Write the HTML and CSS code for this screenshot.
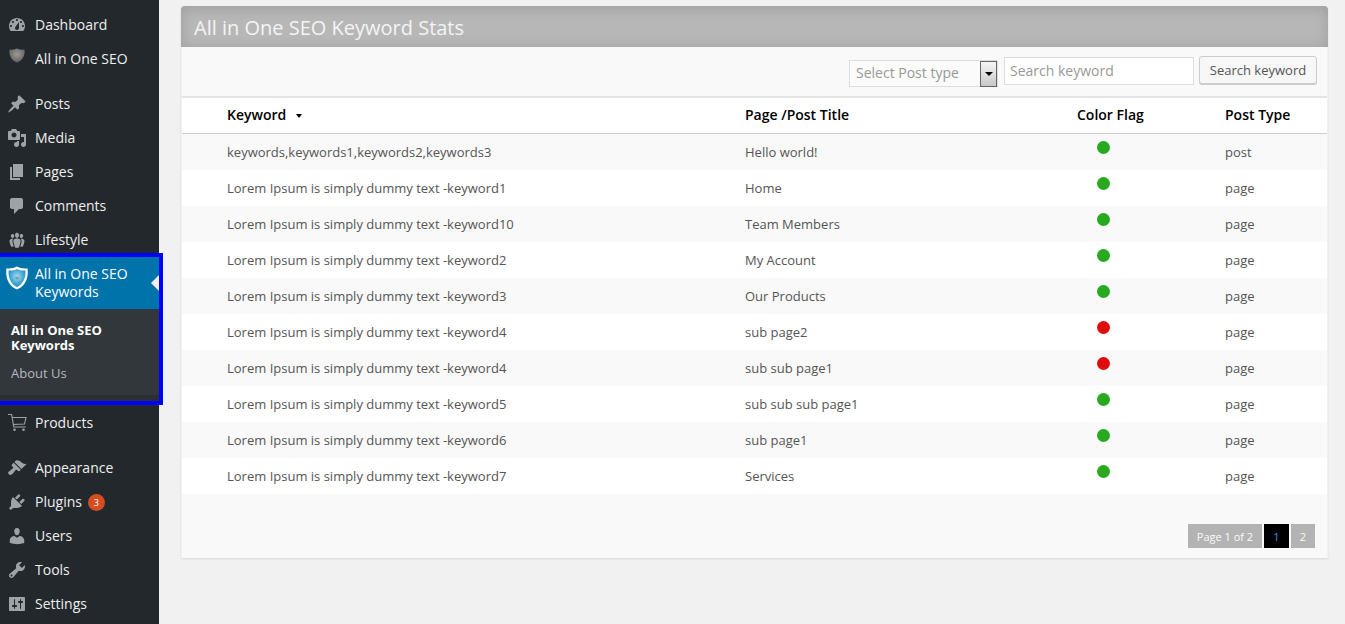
FILE: index.html
```html
<!DOCTYPE html>
<html lang="en">
<head>
    <meta charset="UTF-8" />
    <title>All in One SEO Keyword Stats</title>
    <link rel="stylesheet" href="styles.css">
</head>
<body>
    <div class="sidebar">
        <ul class="menu">
            <li class="menu-item"><svg class="icon" viewBox="0 0 20 20"><path fill-rule="evenodd" d="M3.76 16h12.48c1.1-1.37 1.76-3.11 1.76-5 0-4.42-3.58-8-8-8s-8 3.58-8 8c0 1.89.66 3.63 1.76 5zM10 4c.55 0 1 .45 1 1s-.45 1-1 1-1-.45-1-1 .45-1 1-1zM6 6c.55 0 1 .45 1 1s-.45 1-1 1-1-.45-1-1 .45-1 1-1zm8 0c.55 0 1 .45 1 1s-.45 1-1 1-1-.45-1-1 .45-1 1-1zm-5.37 5.55L12 7v6c0 1.1-.9 2-2 2s-2-.9-2-2c0-.57.24-1.08.63-1.45zM4 10c.55 0 1 .45 1 1s-.45 1-1 1-1-.45-1-1 .45-1 1-1zm12 0c.55 0 1 .45 1 1s-.45 1-1 1-1-.45-1-1 .45-1 1-1z"/></svg>Dashboard</li>
            <li class="menu-item"><svg class="icon icon-up" viewBox="0 0 20 20"><defs><radialGradient id="greyShield" cx="0.5" cy="0.4" r="0.65"><stop offset="0" stop-color="#9a9a98"/><stop offset="1" stop-color="#5c5c5a"/></radialGradient></defs><path fill="url(#greyShield)" d="M10 2.500C7.500 3.600 5 3.900 2.400 3.600c-.4 5.400 1.200 10.400 7.600 13 6.400-2.600 8-7.600 7.600-13C15 3.900 12.500 3.600 10 2.500z"/></svg>All in One SEO</li>
        </ul>
        <ul class="menu menu-group">
            <li class="menu-item"><svg class="icon" viewBox="0 0 20 20"><path d="M10.44 3.020l1.820-1.820 6.360 6.350-1.830 1.820c-1.050-.68-2.480-.57-3.410.36l-.75.75c-.92.93-1.040 2.350-.35 3.410l-1.830 1.820-2.410-2.410-2.800 2.790c-.42.42-3.380 2.710-3.800 2.290s1.860-3.390 2.280-3.810l2.790-2.790L4.100 9.360l1.830-1.820c1.050.69 2.480.57 3.400-.36l.75-.75c.93-.92 1.050-2.350.36-3.410z"/></svg>Posts</li>
            <li class="menu-item"><svg class="icon" viewBox="0 0 20 20"><path fill-rule="evenodd" d="M13 11V4c0-.55-.45-1-1-1h-1.670L9 1H5L3.670 3H2c-.55 0-1 .45-1 1v7c0 .55.45 1 1 1h10c.55 0 1-.45 1-1zM7 4.500c1.380 0 2.500 1.120 2.500 2.500S8.380 9.500 7 9.500 4.500 8.380 4.500 7 5.620 4.500 7 4.500zM14 6h5v10.500c0 1.380-1.120 2.500-2.500 2.500S14 17.880 14 16.500s1.120-2.500 2.500-2.500c.17 0 .34.02.5.05V9h-3V6zm-4 8.050V13h2v3.500c0 1.380-1.120 2.500-2.500 2.500S7 17.880 7 16.500 8.120 14 9.500 14c.17 0 .34.02.5.05z"/></svg>Media</li>
            <li class="menu-item"><svg class="icon" viewBox="0 0 20 20"><path d="M6 15V2h10v13H6zm-1 1h8v2H3V5h2v11z"/></svg>Pages</li>
            <li class="menu-item"><svg class="icon" viewBox="0 0 20 20"><path d="M5 2h9c1.100 0 2 .9 2 2v7c0 1.100-.9 2-2 2h-2l-5 5v-5H5c-1.100 0-2-.9-2-2V4c0-1.100.9-2 2-2z"/></svg>Comments</li>
            <li class="menu-item"><svg class="icon" viewBox="0 0 20 20"><path d="M8.030 4.460c-.29 1.280.55 3.460 1.970 3.460 1.410 0 2.250-2.180 1.960-3.460-.22-.98-1.080-1.630-1.960-1.630-.89 0-1.740.65-1.970 1.630zm-4.130.9c-.25 1.080.47 2.930 1.670 2.930s1.920-1.850 1.670-2.930c-.19-.83-.92-1.390-1.670-1.390s-1.480.56-1.670 1.390zm8.860 0c-.25 1.080.47 2.930 1.660 2.930 1.200 0 1.920-1.850 1.670-2.930-.19-.83-.92-1.390-1.670-1.390-.74 0-1.470.56-1.660 1.390zm-.59 11.430l1.250-4.300C14.200 10 12.710 8.470 10 8.470c-2.720 0-4.210 1.530-3.440 4.020l1.260 4.300C8.050 17.510 9 18 10 18c.98 0 1.940-.49 2.170-1.210zm-6.100-7.630c-.49.67-.96 1.830-.42 3.590l1.120 3.790c-.34.2-.77.31-1.200.31-.85 0-1.650-.41-1.850-1.030l-1.070-3.650c-.65-2.110.61-3.400 2.920-3.400.27 0 .54.02.79.06-.1.1-.2.22-.29.33zm8.350-.39c2.310 0 3.580 1.290 2.920 3.400l-1.070 3.650c-.2.62-1 1.030-1.850 1.030-.43 0-.86-.11-1.200-.31l1.110-3.770c.55-1.780.08-2.940-.42-3.610-.08-.11-.18-.23-.28-.33.25-.04.51-.06.79-.06z"/></svg>Lifestyle</li>
            <li class="menu-current">
                <div class="current-head">
                    <svg class="shield" viewBox="0 0 22 24">
                        <defs><radialGradient id="blueShield" cx="0.5" cy="0.42" r="0.6"><stop offset="0" stop-color="#a5dcef"/><stop offset="0.55" stop-color="#4fb0d6"/><stop offset="1" stop-color="#1f86b8"/></radialGradient></defs>
                        <path fill="#fff" d="M11 .5C8 2 4 2.800.6 2.200.2 4 0 7 .6 10.500 1.700 16.500 5.500 21.500 11 23.500c5.500-2 9.300-7 10.400-13 .6-3.500.4-6.500 0-8.300C18 2.800 14 2 11 .5z"/>
                        <path fill="url(#blueShield)" d="M11 3C8.600 4.100 5.800 4.700 2.700 4.500c-.2 1.600-.2 3.700.2 5.700C3.900 15.200 7 19.200 11 21c4-1.800 7.100-5.800 8.100-10.800.4-2 .4-4.100.2-5.700C16.200 4.700 13.400 4.100 11 3z"/>
                        <ellipse cx="11" cy="12" rx="1.800" ry="1.600" fill="#7f9aa8"/>
                    </svg>
                    <span>All in One SEO Keywords</span>
                </div>
                <ul class="submenu">
                    <li class="sub-active">All in One SEO Keywords</li>
                    <li>About Us</li>
                </ul>
            </li>
            <li class="menu-item"><svg class="icon" viewBox="0 0 20 20"><path fill="none" stroke="#9ea3a8" stroke-width="1.100" d="M1 1.500h3.600l2.200 12.500h12M5.100 4.500h13.900l-1.500 6.500-11.500.5"/><circle cx="7.500" cy="16.800" r="1.300"/><circle cx="16.500" cy="16.800" r="1.300"/></svg>Products</li>
        </ul>
        <ul class="menu menu-group">
            <li class="menu-item"><svg class="icon" viewBox="0 0 20 20"><path d="M14.480 11.060L7.410 3.990l1.500-1.500c.5-.56 2.300-.47 3.510.32 1.210.8 1.430 1.280 2.910 2.100 1.180.64 2.450 1.260 4.450.85zm-.71.71L6.700 4.700 4.930 6.470c-.39.39-.39 1.020 0 1.410l1.060 1.060c.39.39.39 1.030 0 1.420-.6.6-1.430 1.110-2.210 1.690-.35.26-.7.53-1.010.84C1.430 13.230.4 14.790 1.800 16.200s2.970.39 4.310-.97c.31-.31.58-.66.84-1.010.58-.78 1.090-1.610 1.690-2.210.39-.39 1.030-.39 1.420 0l1.060 1.060c.39.39 1.020.39 1.410 0z"/></svg>Appearance</li>
            <li class="menu-item"><svg class="icon" viewBox="0 0 20 20"><path d="M13.110 4.360L9.870 7.600 8 5.730l3.240-3.240c.35-.34 1.050-.2 1.560.32.52.51.66 1.210.31 1.550zm-8 1.770l.91-1.120 9.010 9.010-1.190.84c-.71.71-2.630 1.160-3.820 1.160H6.140L4.900 17.260c-.59.59-1.540.59-2.120 0-.59-.58-.59-1.530 0-2.120l1.240-1.240v-3.880c0-1.130.4-3.190 1.090-3.890zm7.260 3.970l3.240-3.240c.34-.35 1.040-.21 1.550.31.52.51.66 1.210.31 1.550l-3.240 3.250z"/></svg>Plugins<span class="badge">3</span></li>
            <li class="menu-item"><svg class="icon" viewBox="0 0 20 20"><path d="M10 9.250c-2.270 0-2.730-3.440-2.730-3.440C7 4.020 7.820 2 9.970 2c2.160 0 2.980 2.020 2.710 3.810 0 0-.41 3.440-2.680 3.440zm0 2.570L12.720 10c2.390 0 4.520 2.330 4.520 4.530v2.490s-3.650 1.130-7.240 1.130c-3.650 0-7.240-1.130-7.240-1.130v-2.490c0-2.250 1.940-4.480 4.470-4.480z"/></svg>Users</li>
            <li class="menu-item"><svg class="icon" viewBox="0 0 20 20"><path fill-rule="evenodd" d="M16.680 9.770c-1.340 1.340-3.300 1.670-4.950.99l-5.410 6.520c-.99.99-2.590.99-3.580 0s-.99-2.590 0-3.570l6.520-5.420c-.68-1.650-.35-3.610.99-4.950 1.280-1.280 3.120-1.620 4.720-1.060l-2.890 2.890 2.820 2.820 2.860-2.870c.53 1.580.18 3.390-1.080 4.650zM3.810 16.210c.4.39 1.040.39 1.430 0 .4-.4.4-1.040 0-1.430-.39-.4-1.030-.4-1.430 0-.39.39-.39 1.030 0 1.430z"/></svg>Tools</li>
            <li class="menu-item"><svg class="icon" viewBox="0 0 20 20"><path fill-rule="evenodd" d="M18 16V4c0-.55-.45-1-1-1H3c-.55 0-1 .45-1 1v12c0 .55.45 1 1 1h14c.55 0 1-.45 1-1zM8 11h1c.55 0 1 .45 1 1s-.45 1-1 1H8v1.500c0 .28-.22.5-.5.5s-.5-.22-.5-.5V13H6c-.55 0-1-.45-1-1s.45-1 1-1h1V5.500c0-.28.22-.5.5-.5s.5.22.5.5V11zm5-2h-1c-.55 0-1-.45-1-1s.45-1 1-1h1V5.500c0-.28.22-.5.5-.5s.5.22.5.5V7h1c.55 0 1 .45 1 1s-.45 1-1 1h-1v5.500c0 .28-.22.5-.5.5s-.5-.22-.5-.5V9z"/></svg>Settings</li>
        </ul>
    </div>

    <div class="main">
        <div class="panel">
            <h2 class="panel-title">All in One SEO Keyword Stats</h2>
            <div class="panel-body">
                <div class="toolbar">
                    <div class="select-box">
                        <span class="select-label">Select Post type</span>
                        <span class="select-arrow"></span>
                    </div>
                    <input class="search-input" type="text" placeholder="Search keyword">
                    <button class="search-btn" type="button">Search keyword</button>
                </div>

                <table class="stats">
                    <thead>
                        <tr>
                            <th class="col-keyword">Keyword<span class="sort-arrow"></span></th>
                            <th class="col-title">Page /Post Title</th>
                            <th class="col-flag">Color Flag</th>
                            <th class="col-type">Post Type</th>
                        </tr>
                    </thead>
                    <tbody>
                        <tr><td class="col-keyword">keywords,keywords1,keywords2,keywords3</td><td>Hello world!</td><td><span class="dot green"></span></td><td>post</td></tr>
                        <tr><td class="col-keyword">Lorem Ipsum is simply dummy text -keyword1</td><td>Home</td><td><span class="dot green"></span></td><td>page</td></tr>
                        <tr><td class="col-keyword">Lorem Ipsum is simply dummy text -keyword10</td><td>Team Members</td><td><span class="dot green"></span></td><td>page</td></tr>
                        <tr><td class="col-keyword">Lorem Ipsum is simply dummy text -keyword2</td><td>My Account</td><td><span class="dot green"></span></td><td>page</td></tr>
                        <tr><td class="col-keyword">Lorem Ipsum is simply dummy text -keyword3</td><td>Our Products</td><td><span class="dot green"></span></td><td>page</td></tr>
                        <tr><td class="col-keyword">Lorem Ipsum is simply dummy text -keyword4</td><td>sub page2</td><td><span class="dot red"></span></td><td>page</td></tr>
                        <tr><td class="col-keyword">Lorem Ipsum is simply dummy text -keyword4</td><td>sub sub page1</td><td><span class="dot red"></span></td><td>page</td></tr>
                        <tr><td class="col-keyword">Lorem Ipsum is simply dummy text -keyword5</td><td>sub sub sub page1</td><td><span class="dot green"></span></td><td>page</td></tr>
                        <tr><td class="col-keyword">Lorem Ipsum is simply dummy text -keyword6</td><td>sub page1</td><td><span class="dot green"></span></td><td>page</td></tr>
                        <tr><td class="col-keyword">Lorem Ipsum is simply dummy text -keyword7</td><td>Services</td><td><span class="dot green"></span></td><td>page</td></tr>
                    </tbody>
                </table>

                <div class="pager">
                    <span class="pager-info">Page 1 of 2</span>
                    <span class="pager-num current">1</span>
                    <span class="pager-num">2</span>
                </div>
            </div>
        </div>
    </div>
</body>
</html>
```

FILE: styles.css
```css
html, body {
    height: 100%;
}

body {
    margin: 0;
    display: flex;
    overflow: hidden;
    font-family: 'Open Sans', sans-serif;
    background-color: #f1f1f1;
    color: #555;
}

ul {
    list-style: none;
    margin: 0;
    padding: 0;
}

/* sidebar */
.sidebar {
    flex: 0 0 159px;
    width: 159px;
    padding-top: 8px;
    background-color: #23282d;
    color: #eee;
    font-size: 14px;
}

.menu-group {
    margin-top: 11px;
}

.menu-item {
    display: flex;
    align-items: center;
    height: 34px;
    box-sizing: border-box;
    padding: 0 0 2px 7px;
}

.icon {
    flex: none;
    width: 20px;
    height: 20px;
    margin: 2px 8px 0 0;
    fill: #9ea3a8;
}

.menu-item .icon-up {
    margin-top: -4px;
}

.badge {
    width: 17px;
    height: 17px;
    margin: 2px 0 0 6px;
    border-radius: 50%;
    background-color: #d54e21;
    color: #fff;
    font-size: 9px;
    line-height: 17px;
    text-align: center;
}

.menu-current {
    position: relative;
    margin-bottom: 5px;
}

/* the blue box drawn over the screenshot */
.menu-current::after {
    content: '';
    position: absolute;
    top: -4px;
    left: 0;
    right: -4px;
    bottom: -4px;
    border: 4px solid #0000ff;
    border-left: none;
    pointer-events: none;
}

.current-head {
    position: relative;
    display: flex;
    height: 52px;
    padding: 8px 0 0 6px;
    box-sizing: border-box;
    background-color: #0073aa;
    color: #fff;
    line-height: 18px;
}

.current-head span {
    width: 110px;
}

.current-head::after {
    content: '';
    position: absolute;
    top: 18px;
    right: 0;
    border: 8px solid transparent;
    border-left: none;
    border-right-color: #f1f1f1;
}

.shield {
    flex: none;
    width: 22px;
    height: 24px;
    margin: 1px 7px 0 0;
}

.submenu {
    height: 92px;
    box-sizing: border-box;
    padding: 14px 12px 0 11px;
    background: linear-gradient(#32373c 86px, #2a2f34 86px);
    color: #b4b9be;
    font-size: 13px;
    line-height: 15px;
}

.submenu li {
    margin-bottom: 13px;
}

.sub-active {
    color: #fff;
    font-weight: 700;
}

/* main area */
.main {
    flex: 1;
    min-width: 0;
    padding: 6px 17px 0 22px;
}

.panel {
    box-shadow: 0 1px 2px rgba(0, 0, 0, 0.1);
}

.panel-title {
    height: 41px;
    margin: 0;
    padding-left: 13px;
    border-radius: 4px 4px 0 0;
    background-color: #b7b7b7;
    box-shadow: inset 0 2px 14px rgba(0, 0, 0, 0.14);
    color: #f4f4f4;
    font-size: 20px;
    font-weight: 400;
    line-height: 43px;
}

.panel-body {
    height: 511px;
    margin: 0 1px;
    background-color: #f9f9f9;
}

.toolbar {
    display: flex;
    justify-content: flex-end;
    align-items: flex-start;
    height: 49px;
    box-sizing: border-box;
    padding: 9px 10px 0 0;
}

.select-box {
    display: flex;
    justify-content: space-between;
    width: 149px;
    height: 27px;
    box-sizing: border-box;
    margin: 4px 6px 0 0;
    border: 1px solid #ddd;
    background-color: #fbfbfb;
}

.select-label {
    padding-left: 6px;
    color: #999;
    font-size: 14px;
    line-height: 23px;
}

.select-arrow {
    position: relative;
    width: 17px;
    height: 26px;
    box-sizing: border-box;
    border: 1px solid #666;
    background: linear-gradient(#f5f5f5, #c8c8c8);
}

.select-arrow::after {
    content: '';
    position: absolute;
    top: 10px;
    left: 4px;
    border: 4px solid transparent;
    border-bottom: none;
    border-top-color: #000;
}

.search-input {
    width: 190px;
    height: 28px;
    box-sizing: border-box;
    margin: 1px 5px 0 0;
    padding: 0 5px 2px;
    border: 1px solid #ddd;
    background-color: #fff;
    font-family: inherit;
    font-size: 14px;
}

.search-input::placeholder {
    color: #999;
    opacity: 1;
}

.search-btn {
    width: 118px;
    height: 28px;
    padding: 0;
    border: 1px solid #ccc;
    border-radius: 3px;
    background-color: #f7f7f7;
    box-shadow: 0 1px 0 #ccc;
    color: #555;
    font-family: inherit;
    font-size: 13px;
}

.stats {
    width: 100%;
    border-collapse: collapse;
    table-layout: fixed;
    border-top: 2px solid #e5e5e5;
    font-size: 13px;
}

.stats th {
    height: 36px;
    box-sizing: border-box;
    padding: 0 0 1px;
    border-bottom: 1px solid #ccc;
    background-color: #fff;
    color: #000;
    font-size: 14px;
    font-weight: 600;
    text-align: left;
}

.stats td {
    height: 36px;
    padding: 0;
}

.stats tbody tr:nth-child(even) {
    background-color: #fff;
}

.stats th.col-keyword {
    width: 563px;
    padding-left: 45px;
}

.stats td.col-keyword {
    padding-left: 45px;
}

.stats th.col-title {
    width: 332px;
}

.stats th.col-flag {
    width: 148px;
}

.sort-arrow {
    display: inline-block;
    margin-left: 10px;
    vertical-align: 2px;
    border: 3px solid transparent;
    border-bottom: none;
    border-top: 4px solid #000;
}

.dot {
    display: block;
    width: 13px;
    height: 13px;
    margin: -9px 0 0 20px;
    border-radius: 50%;
}

.green {
    background-color: #28a91f;
}

.red {
    background-color: #e00c0c;
}

.pager {
    display: flex;
    justify-content: flex-end;
    gap: 2px;
    padding: 30px 12px 0 0;
    color: #fafafa;
    font-size: 11px;
    line-height: 26px;
}

.pager span {
    height: 24px;
    background-color: #b3b3b3;
    text-align: center;
}

.pager-info {
    width: 74px;
}

.pager .pager-num {
    width: 24px;
}

.pager .current {
    width: 25px;
    background-color: #000;
    color: #3f93e8;
}
```
